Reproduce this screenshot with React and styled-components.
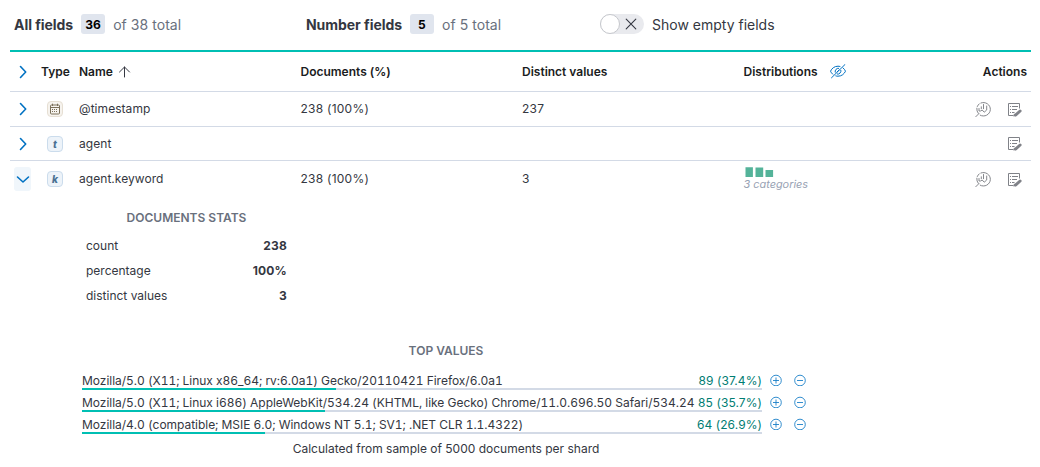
import React from 'react';
import styled, { createGlobalStyle } from 'styled-components';

const Global = createGlobalStyle`
  *, *::before, *::after { box-sizing: border-box; }
  body {
    margin: 0;
    background: #fff;
    color: #343741;
    font-family: Inter, "Liberation Sans", sans-serif;
    font-size: 12px;
    line-height: 18px;
    font-feature-settings: "calt" 0;
  }
`;

const Page = styled.main`
  width: 1040px;
  height: 467px;
  padding: 0 9px 0 10px;
  overflow: hidden;
`;

const Toolbar = styled.header`
  display: grid;
  grid-template-columns: 292px 294px 1fr;
  align-items: center;
  height: 50px;
  padding: 0 0 2px 4px;
  font-size: 14px;
  line-height: 22px;
`;

const Group = styled.div`
  display: flex;
  align-items: center;
  gap: 8px;
  height: 20px;
  white-space: nowrap;
`;

const GroupTitle = styled.h2`
  margin: 0;
  padding-top: 1px;
  font-size: 14px;
  font-weight: 700;
  line-height: 21px;
  letter-spacing: -0.05px;
`;

const CountBadge = styled.span`
  min-width: 24px;
  height: 20px;
  padding: 0 4px;
  border-radius: 3px;
  background: #e0e5ee;
  color: #000;
  font-size: 12px;
  font-weight: 700;
  line-height: 21px;
  text-align: center;
  letter-spacing: 0.2px;
`;

const Label = styled.span`
  padding-top: 1px;
  line-height: 21px;
`;

const Muted = styled(Label)`
  color: #69707d;
  letter-spacing: 0.05px;
`;

const Switch = styled.span`
  display: flex;
  align-items: center;
  width: 44px;
  height: 20px;
  border-radius: 10px;
  background: #e9eaee;
`;

const Thumb = styled.span`
  width: 20px;
  height: 20px;
  border: 1px solid #c5c7cc;
  border-radius: 50%;
  background: #fff;
`;

const CrossSlot = styled.span`
  display: flex;
  justify-content: center;
  width: 22px;
`;

const Table = styled.section`
  border-top: 2px solid #00bfb3;
`;

const Row = styled.div`
  display: grid;
  grid-template-columns: 27px 38px repeat(4, 221.5px) 70px;
  align-items: center;
  height: ${(p) => p.$height}px;
  padding-top: ${(p) => (p.$open ? 2 : 0)}px;
  border-bottom: 1px solid ${(p) => (p.$open ? 'transparent' : '#d3dae6')};
`;

const HeadRow = styled(Row)`
  color: #1a1c21;
  font-weight: 600;
`;

const Cell = styled.div`
  display: flex;
  align-items: center;
  gap: ${(p) => p.$gap || 0}px;
  padding: 0 4px;
  white-space: nowrap;
`;

const NameCell = styled(Cell)`
  letter-spacing: 0.05px;
`;

const NumberCell = styled(Cell)`
  letter-spacing: 0.25px;
`;

const Actions = styled(Cell)`
  justify-content: flex-end;
`;

const ActionIcons = styled(Actions)`
  gap: 15px;
  padding-right: 9px;
`;

const Expander = styled.button`
  display: flex;
  align-items: center;
  justify-content: center;
  width: 17px;
  height: 24px;
  margin-left: 4px;
  padding: 0;
  border: 0;
  border-radius: 3px;
  background: ${(p) => (p.$open ? '#f0f6fb' : 'transparent')};
`;

const tokenTones = {
  date: ['#f6f3ee', '#e6dfd3', '#7b705a'],
  text: ['#edf3f9', '#cbdcec', '#4a7194'],
};

const Token = styled.span`
  display: flex;
  align-items: center;
  justify-content: center;
  width: 16px;
  height: 16px;
  margin-left: 10px;
  border: 1px solid ${(p) => tokenTones[p.$tone][1]};
  border-radius: 4px;
  background: ${(p) => tokenTones[p.$tone][0]};
  color: ${(p) => tokenTones[p.$tone][2]};
  font-size: 10px;
  font-style: italic;
  font-weight: 800;
  line-height: 12px;
`;

const MiniChart = styled.div`
  display: flex;
  flex-direction: column;
  align-items: flex-start;
  height: 27px;
`;

const MiniCaption = styled.span`
  color: #98a2b3;
  font-size: 10.9px;
  font-style: italic;
  line-height: 13px;
`;

const Details = styled.div`
  width: 728px;
  margin-left: 72px;
  padding-top: 13px;
`;

const PanelTitle = styled.h3`
  margin: 0;
  color: #69707d;
  font-size: 12px;
  font-weight: 600;
  line-height: 18px;
  text-align: center;
  text-transform: uppercase;
`;

const Stats = styled.section`
  width: 209px;
  margin-bottom: 34px;
`;

const StatList = styled.dl`
  margin: 6px 0 0;
`;

const Stat = styled.div`
  display: flex;
  justify-content: space-between;
  align-items: center;
  height: 25px;
  padding: 0 4px;
`;

const StatValue = styled.dd`
  margin: 0;
  font-weight: 700;
  letter-spacing: 0.2px;
`;

const ValueList = styled.div`
  display: flex;
  flex-direction: column;
  gap: 2px;
  margin-top: 10px;
`;

const ValueRow = styled.div`
  display: flex;
  height: 20px;
`;

const ValueBar = styled.div`
  display: flex;
  flex-direction: column;
  width: 680px;
`;

const ValueText = styled.div`
  display: flex;
  justify-content: space-between;
  height: 18px;
  line-height: 21px;
  white-space: nowrap;
`;

const ValueLabel = styled.span`
  font-feature-settings: "tnum" 1, "calt" 0;
  letter-spacing: -0.03px;
`;

const ValueCount = styled.span`
  color: #017d73;
  letter-spacing: 0.08px;
`;

const Track = styled.div`
  height: 2px;
  background: #d3dae6;
`;

const Fill = styled.div`
  height: 2px;
  background: #00bfb3;
`;

const FilterButtons = styled.div`
  display: flex;
  align-items: center;
  gap: 12px;
  padding-left: 7.5px;
`;

const Footnote = styled.p`
  margin: 6px 0 0;
  text-align: center;
`;

const Chevron = ({ open }) => (
  <svg width="14" height="14" viewBox="0 0 14 14" fill="none" stroke="#0071c2" strokeWidth="1.6" strokeLinecap="round" strokeLinejoin="round">
    <path d={open ? 'M1.5 5 7 10 12.5 5' : 'M4.5 1.5 9.7 7 4.5 12.5'} />
  </svg>
);

const SortArrow = () => (
  <svg width="12" height="12" viewBox="0 0 12 12" fill="none" stroke="#343741" strokeLinecap="round" strokeLinejoin="round">
    <path d="M5.500 11v-10M.5 6l5-5 5 5" />
  </svg>
);

const Cross = () => (
  <svg width="12" height="12" viewBox="0 0 12 12" stroke="#343741" strokeWidth="1.1" strokeLinecap="round">
    <path d="M1.2 1.2l9.6 9.6M10.8 1.2 1.2 10.8" />
  </svg>
);

const EyeClosed = () => (
  <svg width="16" height="16" viewBox="0 0 16 16" fill="none" stroke="#0071c2" strokeWidth="1" strokeLinecap="round">
    <path d="M10 2.500A7 7 0 0 0 8 2.200C4.200 2.200 1.800 4.500.5 7.200c.5 1.100 1.200 2.100 2.200 3M13 3.900c1.100.9 1.900 2 2.500 3.300C14.200 9.900 11.800 12.200 8 12.200c-.8 0-1.500-.1-2.200-.3" />
    <path d="M8.600 4.300A3 3 0 0 0 5.200 8.200M10.900 6.400a3 3 0 0 1-3.600 3.700M15 .5 1.500 13.800" />
    <path d="M7.100 7.900 9 6" />
  </svg>
);

const Calendar = () => (
  <svg width="12" height="12" viewBox="0 0 12 12" fill="none" stroke="currentColor">
    <rect x="1.500" y="2" width="9" height="9" rx="1" />
    <path d="M1.500 4.500h9M3.500.7V3M8.500.7V3" />
    <path d="M3 6.500h6M3 8.500h6" strokeDasharray="1 1" />
  </svg>
);

const LensIcon = () => (
  <svg width="17" height="17" viewBox="0 0 17 17" fill="none" stroke="#85878c" strokeWidth="1" strokeLinecap="round">
    <path d="M3.300 12.400A7 7 0 0 1 1.800 7.200M2.300 5.500A7 7 0 0 1 4.300 2.800M5.900 2A6.800 6.800 0 1 1 5.200 14.200M.8 15.700l3.100-3.100" />
    <path d="M4 7.500v2.500h1.500l1.700-1 2 2.200L11.700 9V5M6.300 5.800v1.900M8.500 3.500v4.200" />
  </svg>
);

const IndexEdit = () => (
  <svg width="15" height="15" viewBox="0 0 15 15" fill="none" stroke="#808288">
    <path d="M6.500 13.500h-5v-12h11v5" />
    <path d="M3 4.500h1M5 4.500h6M3 7.500h1M5 7.500h5M3 10.500h1M5 10.500h2.500" />
    <path d="m8.800 12.900 4.300-3.900" strokeWidth="3" strokeLinecap="round" />
    <path d="M6.300 14.500 7 11.500l2.500 2.500z" fill="#808288" stroke="none" />
  </svg>
);

const FilterIcon = ({ plus }) => (
  <svg width="12" height="12" viewBox="0 0 12 12" fill="none" stroke="#1b80c8" strokeWidth="0.9">
    <circle cx="6" cy="6.500" r="5.300" />
    <path d={plus ? 'M3 6.500h6M6 3.500v6' : 'M3 6.500h6'} />
  </svg>
);

const CategoryBars = () => (
  <svg width="30" height="12" viewBox="0 0 30 12" fill="#54b399">
    <path d="M1.500 1.200h7.400V11H1.500zM11.500 1.600h7.700V11h-7.700zM21.500 4h7.600v7h-7.600z" />
  </svg>
);

const fields = [
  { name: '@timestamp', height: 35, tone: 'date', docs: '238 (100%)', distinct: '237', lens: true },
  { name: 'agent', height: 34, tone: 'text', letter: 't' },
  { name: 'agent.keyword', height: 35, tone: 'text', letter: 'k', docs: '238 (100%)', distinct: '3', lens: true, open: true },
];

const stats = [['count', '238'], ['percentage', '100%'], ['distinct values', '3']];

const topValues = [
  ['Mozilla/5.0 (X11; Linux x86_64; rv:6.0a1) Gecko/20110421 Firefox/6.0a1', 89, 37.4],
  ['Mozilla/5.0 (X11; Linux i686) AppleWebKit/534.24 (KHTML, like Gecko) Chrome/11.0.696.50 Safari/534.24', 85, 35.7],
  ['Mozilla/4.0 (compatible; MSIE 6.0; Windows NT 5.1; SV1; .NET CLR 1.1.4322)', 64, 26.9],
];

const FieldRow = ({ field }) => (
  <Row $open={field.open} $height={field.height}>
    <Expander $open={field.open} aria-label="Toggle details"><Chevron open={field.open} /></Expander>
    <Token $tone={field.tone}>{field.letter || <Calendar />}</Token>
    <NameCell>{field.name}</NameCell>
    <NumberCell>{field.docs}</NumberCell>
    <NumberCell>{field.distinct}</NumberCell>
    <Cell>
      {field.open && (
        <MiniChart>
          <CategoryBars />
          <MiniCaption>3 categories</MiniCaption>
        </MiniChart>
      )}
    </Cell>
    <ActionIcons>
      {field.lens && <LensIcon />}
      <IndexEdit />
    </ActionIcons>
  </Row>
);

export default function App() {
  return (
    <Page>
      <Global />
      <Toolbar>
        <Group>
          <GroupTitle>All fields</GroupTitle>
          <CountBadge>36</CountBadge>
          <Muted>of 38 total</Muted>
        </Group>
        <Group>
          <GroupTitle>Number fields</GroupTitle>
          <CountBadge>5</CountBadge>
          <Muted>of 5 total</Muted>
        </Group>
        <Group>
          <Switch role="switch" aria-checked="false">
            <Thumb />
            <CrossSlot><Cross /></CrossSlot>
          </Switch>
          <Label>Show empty fields</Label>
        </Group>
      </Toolbar>
      <Table>
        <HeadRow $height={40}>
          <Expander aria-label="Expand all"><Chevron /></Expander>
          <Cell>Type</Cell>
          <Cell $gap={6}>Name <SortArrow /></Cell>
          <Cell>Documents (%)</Cell>
          <Cell>Distinct values</Cell>
          <Cell $gap={12}>Distributions <EyeClosed /></Cell>
          <Actions>Actions</Actions>
        </HeadRow>
        {fields.map((field) => <FieldRow key={field.name} field={field} />)}
        <Details>
          <Stats>
            <PanelTitle>Documents stats</PanelTitle>
            <StatList>
              {stats.map(([label, value]) => (
                <Stat key={label}><dt>{label}</dt><StatValue>{value}</StatValue></Stat>
              ))}
            </StatList>
          </Stats>
          <PanelTitle>Top values</PanelTitle>
          <ValueList>
            {topValues.map(([label, count, percent]) => (
              <ValueRow key={label}>
                <ValueBar>
                  <ValueText><ValueLabel>{label}</ValueLabel><ValueCount>{`${count} (${percent}%)`}</ValueCount></ValueText>
                  <Track><Fill style={{ width: `${percent}%` }} /></Track>
                </ValueBar>
                <FilterButtons><FilterIcon plus /><FilterIcon /></FilterButtons>
              </ValueRow>
            ))}
          </ValueList>
          <Footnote>Calculated from sample of 5000 documents per shard</Footnote>
        </Details>
      </Table>
    </Page>
  );
}
